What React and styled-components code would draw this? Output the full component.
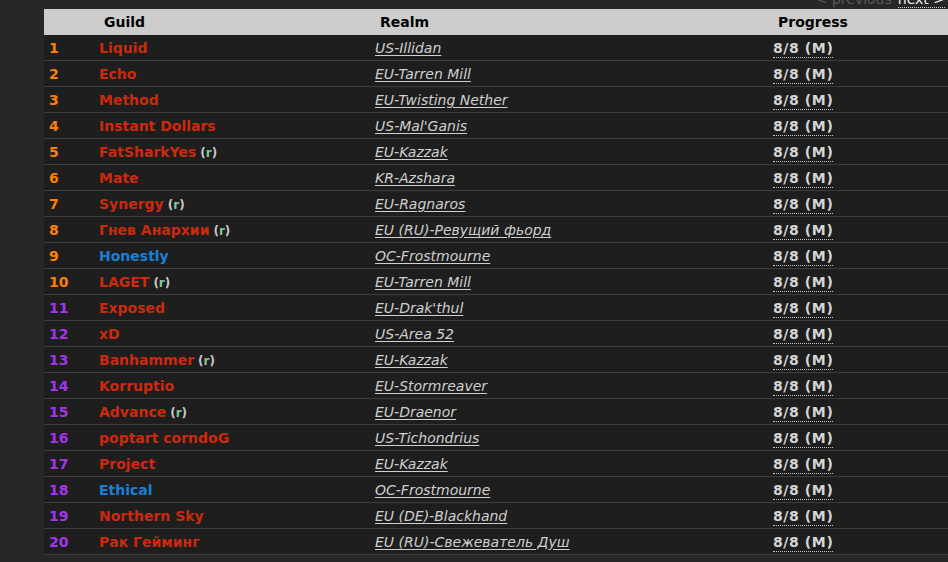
import React from "react";
import styled, { createGlobalStyle } from "styled-components";

const Global = createGlobalStyle`
  html, body { margin: 0; padding: 0; background: #272727; overflow: hidden; }
  body { font-family: "DejaVu Sans", Verdana, sans-serif; font-size: 14px; }
`;

const Page = styled.div`
  padding-left: 44px;
  width: 904px;
`;

const Pager = styled.div`
  margin-top: -8px;
  height: 14px;
  line-height: 14px;
  font-size: 14px;
  text-align: right;
  padding-right: 3px;
  margin-bottom: 3px;
  white-space: nowrap;
`;

const PagerDim = styled.span`
  color: #5a5a5a;
  margin-right: 6px;
`;

const PagerLink = styled.span`
  color: #f0f0f0;
  border-bottom: 1px dotted #cfcfcf;
`;

const Table = styled.div`
  width: 960px;
  background: #1e1e1e;
`;

const Row = styled.div`
  display: grid;
  grid-template-columns: 50px 276px 398px 1fr;
  height: ${(p) => (p.$head ? "26px" : "25px")};
  align-items: center;
  background: ${(p) => (p.$head ? "#cccccc" : "#1e1e1e")};
  border-bottom: ${(p) => (p.$head ? "none" : "1px solid #3d3d3d")};
`;

const HeadCell = styled.div`
  padding-left: 10px;
  font-weight: bold;
  color: #000;
  font-size: 14px;
`;

const Cell = styled.div`
  padding-left: 5px;
  white-space: nowrap;
`;

const Rank = styled(Cell)`
  font-weight: bold;
  color: ${(p) => (p.$epic ? "#a335ee" : "#ff8000")};
`;

const GuildName = styled.span`
  font-weight: bold;
  color: ${(p) => (p.$blue ? "#1d7fd4" : "#cc2a0c")};
`;

const Recruit = styled.span`
  font-size: 12px;
  font-weight: bold;
  color: #c8c8c8;
  margin-left: 4px;
`;

const RecruitR = styled.span`
  color: #7fc99a;
`;

const Realm = styled.span`
  font-style: italic;
  color: #cfcfcf;
  text-decoration: underline;
  text-underline-offset: 2px;
`;

const Progress = styled.span`
  font-weight: bold;
  color: #d4d4d4;
  letter-spacing: 0.6px;
  border-bottom: 1px dotted #c8c8c8;
  padding-bottom: 1px;
`;

const rows = [
  ["Liquid", "US-Illidan", 0, 0],
  ["Echo", "EU-Tarren Mill", 0, 0],
  ["Method", "EU-Twisting Nether", 0, 0],
  ["Instant Dollars", "US-Mal'Ganis", 0, 0],
  ["FatSharkYes", "EU-Kazzak", 1, 0],
  ["Mate", "KR-Azshara", 0, 0],
  ["Synergy", "EU-Ragnaros", 1, 0],
  ["Гнев Анархии", "EU (RU)-Ревущий фьорд", 1, 0],
  ["Honestly", "OC-Frostmourne", 0, 1],
  ["LAGET", "EU-Tarren Mill", 1, 0],
  ["Exposed", "EU-Drak'thul", 0, 0],
  ["xD", "US-Area 52", 0, 0],
  ["Banhammer", "EU-Kazzak", 1, 0],
  ["Korruptio", "EU-Stormreaver", 0, 0],
  ["Advance", "EU-Draenor", 1, 0],
  ["poptart corndoG", "US-Tichondrius", 0, 0],
  ["Project", "EU-Kazzak", 0, 0],
  ["Ethical", "OC-Frostmourne", 0, 1],
  ["Northern Sky", "EU (DE)-Blackhand", 0, 0],
  ["Рак Гейминг", "EU (RU)-Свежеватель Душ", 0, 0],
];

export default function App() {
  return (
    <Page>
      <Global />
      <Pager>
        <PagerDim>&lt; previous</PagerDim>
        <PagerLink>next &gt;</PagerLink>
      </Pager>
      <Table>
        <Row $head>
          <HeadCell />
          <HeadCell>Guild</HeadCell>
          <HeadCell>Realm</HeadCell>
          <HeadCell>Progress</HeadCell>
        </Row>
        {rows.map(([name, realm, rec, blue], i) => (
          <Row key={i}>
            <Rank $epic={i >= 10}>{i + 1}</Rank>
            <Cell>
              <GuildName $blue={!!blue}>{name}</GuildName>
              {rec ? (
                <Recruit>
                  (<RecruitR>r</RecruitR>)
                </Recruit>
              ) : null}
            </Cell>
            <Cell>
              <Realm>{realm}</Realm>
            </Cell>
            <Cell>
              <Progress>8/8 (M)</Progress>
            </Cell>
          </Row>
        ))}
      </Table>
    </Page>
  );
}
